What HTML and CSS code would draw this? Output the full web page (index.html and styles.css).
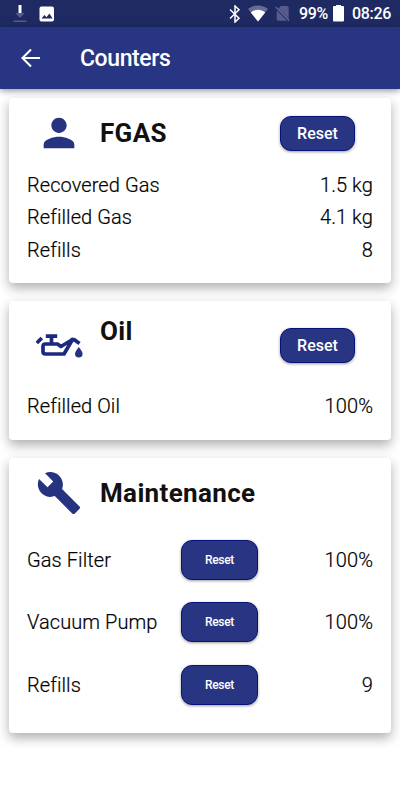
FILE: index.html
```html
<!DOCTYPE html>
<html lang="en">
<head>
<meta charset="utf-8">
<title>Counters</title>
<link rel="stylesheet" href="styles.css">
</head>
<body>
<div class="status">
  <svg class="download" width="14" height="18" viewBox="0 0 14 18"><path d="M5.500 0h3v8h-3z" fill="#fff"/><path d="M2.200 8h9.600L7 13zM.7 15.500h12.600v1.600H.7z" fill="#555c8c"/></svg>
  <svg class="photo" width="16" height="16" viewBox="0 0 16 16"><rect x=".5" y=".5" width="14.500" height="15" rx="2" fill="#fff"/><path d="M2.500 12.500 5.400 9l2.100 2.300 2.900-3.800 3.200 5z" fill="#1f2a63"/></svg>
  <svg class="bt" width="12" height="18" viewBox="0 0 12 18"><path d="m1 4.500 9 8.700-4 3.800V1l4 3.800-9 8.700" fill="none" stroke="#fff" stroke-width="1.500"/></svg>
  <svg class="wifi" width="20" height="17" viewBox="0 0 20 17"><path d="M0 4C5.700-.8 14.300-.8 20 4L10 16.500z" fill="#666c98"/><path d="M2.800 7.400c4.400-3.500 10-3.500 14.400 0L10 16.500z" fill="#fff"/></svg>
  <svg class="sim" width="15" height="17" viewBox="0 0 15 17"><path d="M6 1h6q1.700 0 1.700 1.700v11L3.500 3.400zM1.700 5.200 12 15.500q-.3.200-.8.200H3.200q-1.500 0-1.500-1.500z" fill="#555c8c"/><path d="m.8 2 13.400 13.500" stroke="#666c98" stroke-width="1.200"/></svg>
  <span class="percent">99%</span>
  <svg class="battery" width="11" height="17" viewBox="0 0 11 17"><path d="M3 0h5v1h2q1 0 1 1v13.500q0 1-1 1H1q-1 0-1-1V2q0-1 1-1h2z" fill="#fff"/></svg>
  <span class="clock">08:26</span>
</div>
<header class="bar">
  <svg width="24" height="24" viewBox="0 0 24 24"><path d="M21 12H4M12 3.500 3.500 12l8.500 8.500" fill="none" stroke="#fff" stroke-width="2.100"/></svg>
  <h1>Counters</h1>
</header>
<main>
  <section class="card gas">
    <div class="head">
      <svg class="icon" width="46" height="46" viewBox="0 0 24 24"><path d="M12 12c2.200 0 4-1.800 4-4s-1.800-4-4-4-4 1.800-4 4 1.800 4 4 4zm0 2c-2.700 0-8 1.300-8 4v2h16v-2c0-2.700-5.300-4-8-4z"/></svg>
      <h2>FGAS</h2>
      <button>Reset</button>
    </div>
    <div class="row"><span>Recovered Gas</span><span>1.5 kg</span></div>
    <div class="row"><span>Refilled Gas</span><span>4.1 kg</span></div>
    <div class="row"><span>Refills</span><span>8</span></div>
  </section>
  <section class="card oil">
    <div class="head">
      <svg class="icon" width="50" height="28" viewBox="0 0 50 28"><g fill="none" stroke="#1c2981" stroke-width="3.700" stroke-linejoin="round"><path d="M.8 11 5.800 6M9.800 4.200h11.400M15.500 4v7.500M9.500 12h12l3.500 2.500L36.500 7.500 28 22H9.500q-2.500 0-2.500-2.500v-5q0-2.500 2.500-2.500zM34.500 7.500h3.500l5.500 4"/></g><path d="M42.800 15c-1.700 2.300-3.800 4.900-3.800 6.800a3.800 3.800 0 0 0 7.600 0c0-1.900-2.100-4.500-3.800-6.800z"/></svg>
      <h2>Oil</h2>
      <button>Reset</button>
    </div>
    <div class="row"><span>Refilled Oil</span><span>100%</span></div>
  </section>
  <section class="card maintenance">
    <div class="head">
      <svg class="icon" width="46" height="46" viewBox="0 0 24 24"><path d="M22.700 19l-9.100-9.100c.9-2.300.4-5-1.500-6.900-2-2-5-2.400-7.400-1.300L9 6 6 9 1.600 4.700C.4 7.100.9 10.100 2.900 12.100c1.900 1.900 4.600 2.400 6.900 1.500l9.100 9.100c.4.400 1 .4 1.400 0l2.300-2.300c.5-.4.500-1.100.1-1.400z"/></svg>
      <h2>Maintenance</h2>
    </div>
    <div class="row"><span>Gas Filter</span><button>Reset</button><span>100%</span></div>
    <div class="row"><span>Vacuum Pump</span><button>Reset</button><span>100%</span></div>
    <div class="row"><span>Refills</span><button>Reset</button><span>9</span></div>
  </section>
</main>
</body>
</html>
```
FILE: styles.css
```css
* { box-sizing: border-box; }
body { margin: 0; height: 800px; overflow: hidden; background: #fff; color: #111; font-family: Roboto, sans-serif; }
svg { display: block; flex: none; }
h1, h2 { margin: 0; }
.status { height: 27px; display: flex; align-items: center; padding: 0 9px 0 13px; background: #1f2a63; color: #fff; font-size: 16px; font-weight: 500; line-height: 27px; }
.photo { margin-left: 12px; }
.bt { margin-left: auto; }
.wifi { margin-left: 7px; }
.sim { margin-left: 7px; }
.percent { width: 29px; margin-left: 9px; letter-spacing: -.3px; }
.battery { margin-left: 5px; }
.clock { width: 39px; margin-left: 8px; letter-spacing: -.3px; }
.bar { height: 62px; display: flex; align-items: center; gap: 37px; padding-left: 19px; background: #273582; color: #fff; box-shadow: 0 2px 6px rgba(0,0,0,.4); }
h1 { font-size: 23px; font-weight: 500; line-height: 28px; letter-spacing: -.4px; padding-top: 2px; }
main { display: flex; flex-direction: column; gap: 17.500px; padding: 8.500px 9px; }
.card { padding: 0 18px; background: #fff; border-radius: 4px; box-shadow: 0 5px 12px rgba(0,0,0,.32); }
.gas { height: 185.500px; }
.oil { height: 139.500px; }
.maintenance { height: 275.500px; }
.head { display: grid; grid-template-columns: 73px 1fr 75px; align-items: center; height: 71px; padding-right: 18px; }
.icon { margin-left: 9px; fill: #263380; }
h2 { font-size: 26px; font-weight: 700; line-height: 30px; letter-spacing: .35px; }
button { border: 1px solid #08127d; border-radius: 11px; background: #273582; color: #fff; font-family: inherit; font-weight: 500; padding: 0; box-shadow: 0 1px 3px rgba(0,0,0,.4); }
.head button { width: 75px; height: 35px; font-size: 16px; }
.row { display: flex; justify-content: space-between; align-items: center; height: 32.300px; padding-top: 1px; color: #000; font-size: 20px; font-weight: 300; letter-spacing: .08px; -webkit-text-stroke: .2px #000; }
.oil .head { height: 90.500px; }
.oil .row { height: 29px; }
.oil h2 { margin-bottom: 29px; }
.maintenance .row { display: grid; grid-template-columns: 154px 77px 1fr; height: 62.300px; }
.maintenance .row span:last-child { text-align: right; }
.maintenance .row button { width: 77px; height: 40px; font-size: 12px; letter-spacing: -.3px; -webkit-text-stroke: 0; }
```
